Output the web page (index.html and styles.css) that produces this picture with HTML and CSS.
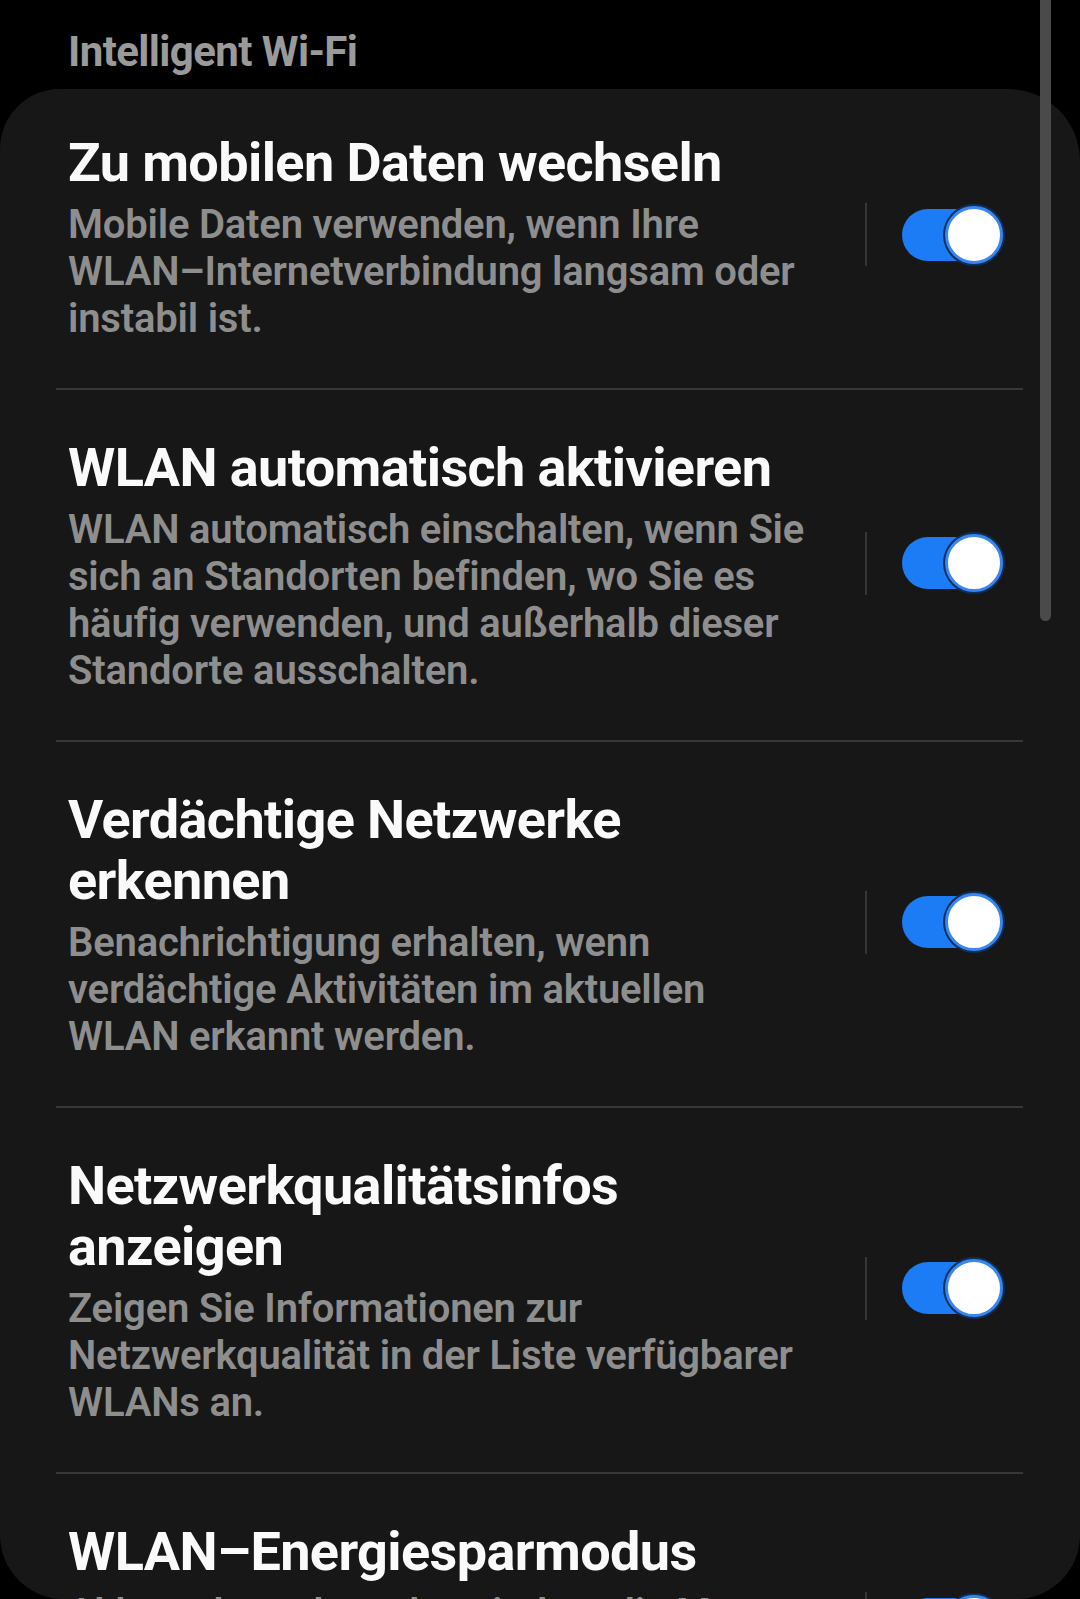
FILE: index.html
```html
<!DOCTYPE html>
<html lang="de">
<head>
  <meta charset="UTF-8" />
  <title>Intelligent Wi-Fi</title>
  <link rel="stylesheet" href="styles.css">
</head>
<body>
  <div class="screen">
    <div class="scrollbar"></div>

    <h2 class="section-title">Intelligent Wi-Fi</h2>

    <div class="card">
      <div class="row">
        <div class="text">
          <div class="title">Zu mobilen Daten wechseln</div>
          <div class="desc">Mobile Daten verwenden, wenn Ihre WLAN–Internetverbindung langsam oder instabil ist.</div>
        </div>
        <div class="control">
          <span class="sep"></span>
          <span class="switch"><span class="thumb"></span></span>
        </div>
      </div>

      <div class="row">
        <div class="text">
          <div class="title">WLAN automatisch aktivieren</div>
          <div class="desc">WLAN automatisch einschalten, wenn Sie sich an Standorten befinden, wo Sie es häufig verwenden, und außerhalb dieser Standorte ausschalten.</div>
        </div>
        <div class="control">
          <span class="sep"></span>
          <span class="switch"><span class="thumb"></span></span>
        </div>
      </div>

      <div class="row">
        <div class="text">
          <div class="title">Verdächtige Netzwerke erkennen</div>
          <div class="desc">Benachrichtigung erhalten, wenn verdächtige Aktivitäten im aktuellen WLAN erkannt werden.</div>
        </div>
        <div class="control">
          <span class="sep"></span>
          <span class="switch"><span class="thumb"></span></span>
        </div>
      </div>

      <div class="row">
        <div class="text">
          <div class="title">Netzwerkqualitätsinfos anzeigen</div>
          <div class="desc">Zeigen Sie Informationen zur Netzwerkqualität in der Liste verfügbarer WLANs an.</div>
        </div>
        <div class="control">
          <span class="sep"></span>
          <span class="switch"><span class="thumb"></span></span>
        </div>
      </div>

      <div class="row last">
        <div class="text">
          <div class="title">WLAN–Energiesparmodus</div>
          <div class="desc">Akkuverbrauch senken, indem die Menge der WLAN–Daten analysiert und angepasst wird.</div>
        </div>
        <div class="control">
          <span class="sep"></span>
          <span class="switch"><span class="thumb"></span></span>
        </div>
      </div>
    </div>
  </div>
</body>
</html>
```

FILE: styles.css
```css
* { box-sizing: border-box; }

body {
  margin: 0;
  background: #000;
  font-family: Roboto, "Noto Sans", sans-serif;
}

.screen {
  position: relative;
  height: 1599px;
  overflow: hidden;
  border-radius: 0 0 64px 64px;
}

.scrollbar {
  position: absolute;
  top: 0; left: 1040px;
  width: 11px; height: 621px;
  border-radius: 0 0 6px 6px;
  background: #4a4a4a;
  z-index: 2;
}

.section-title {
  margin: 0;
  padding: 27px 68px 0;
  font-size: 42px;
  line-height: 50px;
  font-weight: 700;
  letter-spacing: -0.6px;
  color: #9a9a9a;
}

.card {
  margin-top: 12px;
  background: #171717;
  border-radius: 60px 72px 0 0;
  padding-bottom: 120px;
}

.row {
  display: flex;
  align-items: center;
  margin: 0 57px 0 56px;
  padding: 47px 20px 46px 12px;
  border-bottom: 2px solid #383838;
}
.row:first-child { padding-top: 43px; }
.row.last { border-bottom: none; }

.text { flex: 1; min-width: 0; }

.title {
  font-size: 54px;
  line-height: 61px;
  font-weight: 700;
  letter-spacing: -0.6px;
  color: #fafafa;
}

.desc {
  margin-top: 8px;
  font-size: 40px;
  line-height: 47px;
  font-weight: 600;
  letter-spacing: -0.2px;
  color: #8e8e8e;
}

.control {
  display: flex;
  align-items: center;
  margin-left: 49px;
  margin-top: -5px;
}

.sep {
  width: 2px; height: 63px;
  background: #363636;
  margin-right: 35px;
}

.switch {
  position: relative;
  width: 96px; height: 52px;
  margin-right: 5px;
  border-radius: 26px;
  background: #1b7cf5;
}

.thumb {
  position: absolute;
  right: -5px; top: -3px;
  width: 58px; height: 58px;
  border-radius: 50%;
  background: #fff;
  border: 3px solid #3a86ee;
  box-shadow: 0 0 0 2px #0d2f5e;
}
```
